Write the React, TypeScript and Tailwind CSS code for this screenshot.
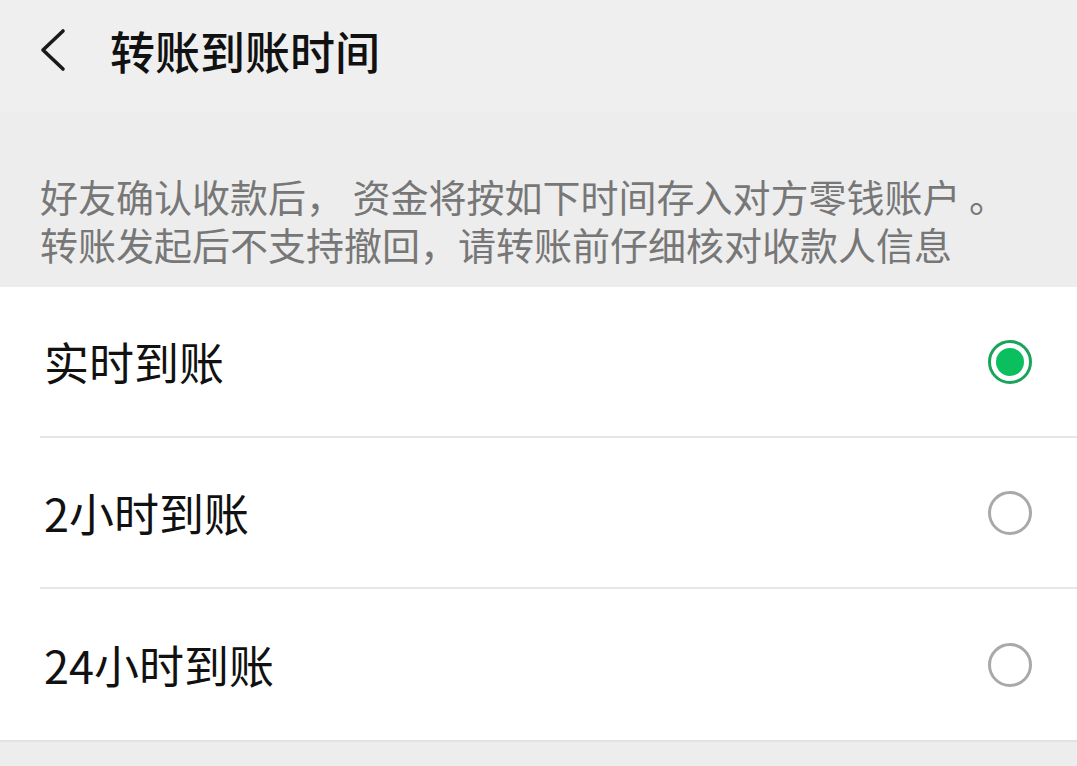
const font = { fontFamily: '"Noto Sans CJK SC", "Noto Sans", sans-serif' }

const options = [
  { label: '实时到账', checked: true },
  { label: '2小时到账', checked: false },
  { label: '24小时到账', checked: false },
]

function Radio({ checked }: { checked: boolean }) {
  if (checked) {
    return (
      <div className="w-[44px] h-[44px] rounded-full border-[3px] border-[#1aa45a] flex items-center justify-center">
        <div className="w-[28px] h-[28px] rounded-full bg-[#0bbf5f]" />
      </div>
    )
  }
  return <div className="w-[44px] h-[44px] rounded-full border-[3px] border-[#a9a9a9]" />
}

export default function App() {
  return (
    <div className="w-[1077px] h-[766px] bg-[#ededed] flex flex-col overflow-hidden" style={font}>
      <div className="h-[112px] bg-[#efefef] flex items-center pb-[12px]">
        <div className="w-[110px] pl-[38px] flex items-center">
          <svg width="30" height="44" viewBox="0 0 30 44" fill="none">
            <path d="M25 3 L5 22 L25 41" stroke="#1a1a1a" strokeWidth="3.6" strokeLinecap="round" strokeLinejoin="round" />
          </svg>
        </div>
        <h1 className="text-[45px] font-medium text-[#111] leading-none">转账到账时间</h1>
      </div>

      <div className="pt-[60px] pb-[19px] px-[40px] text-[38px] leading-[48px] text-[#777]">
        <p className="whitespace-nowrap">
          好友确认收款后， 资金将按如下时间存入对方零钱账户 。
          <br />
          转账发起后不支持撤回，请转账前仔细核对收款人信息
        </p>
      </div>

      <div className="bg-white">
        {options.map((o, i) => (
          <div key={o.label} className="pl-[40px]">
            <div
              className={
                'h-[151px] flex items-center justify-between pr-[45px] ' +
                (i < options.length - 1 ? 'border-b-2 border-[#e6e6e6]' : '')
              }
            >
              <span className="pl-[4px] text-[45px] text-[#111] leading-none">{o.label}</span>
              <Radio checked={o.checked} />
            </div>
          </div>
        ))}
      </div>
      <div className="flex-1 border-t-2 border-[#e2e2e2] bg-[#ededed]" />
    </div>
  )
}
